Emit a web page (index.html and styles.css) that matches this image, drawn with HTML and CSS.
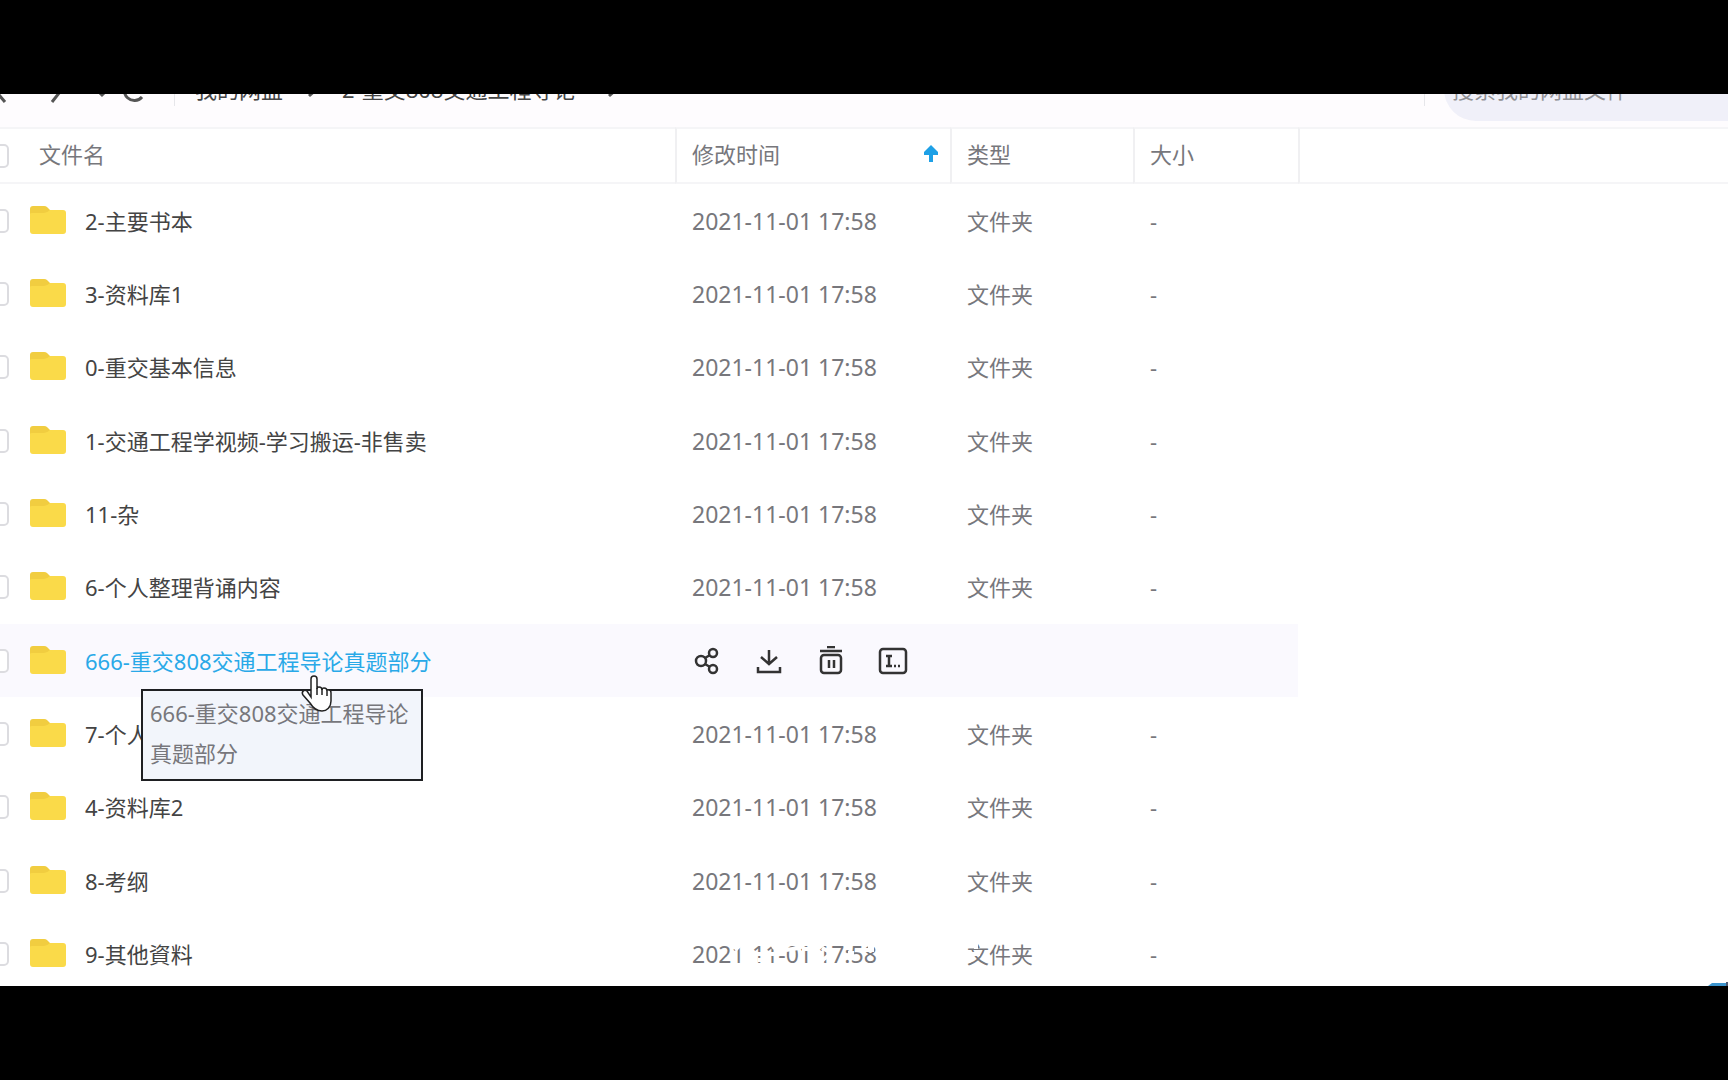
FILE: index.html
```html
<!DOCTYPE html>
<html lang="zh-CN">
<head>
<meta charset="utf-8">
<title>我的网盘</title>
<link rel="stylesheet" href="styles.css">
</head>
<body>
<svg class="defs" width="0" height="0" aria-hidden="true">
  <symbol id="folder" viewBox="0 0 38 30">
    <path d="M1 5q0-3 3-3h11q2 0 3 1l4 4v8H1z" fill="#f1cd40"/>
    <path d="M1 10q0-1 2-1h12q3 0 6-3h13q3 0 3 3v18q0 3-3 3H4q-3 0-3-3z" fill="#fada49"/>
  </symbol>
</svg>
<main class="stage">
  <header class="toolbar">
    <nav class="crumbs" aria-label="路径">
      <button class="nav back" aria-label="后退"><svg width="20" height="28" viewBox="0 0 20 28"><path d="M17 27 6 14 17 1"/></svg></button>
      <button class="nav next" aria-label="前进"><svg width="20" height="28" viewBox="0 0 20 28"><path d="m4 0 11 13L4 27"/></svg></button>
      <button class="nav more" aria-label="历史"><svg width="12" height="28" viewBox="0 0 12 28"><path d="m2 16 4 4 4-4"/></svg></button>
      <button class="nav reload" aria-label="刷新"><svg width="24" height="28" viewBox="0 0 24 28"><path d="M20 9A10 10 0 1 0 20 22"/></svg></button>
      <span class="rule"></span>
      <a class="crumb root" href="#">我的网盘</a>
      <svg class="sep" width="16" height="28" viewBox="0 0 16 28"><path d="m2 5 9 8-9 8"/></svg>
      <a class="crumb current" href="#">2-重交808交通工程导论</a>
      <svg class="sep" width="16" height="28" viewBox="0 0 16 28"><path d="m2 5 9 8-9 8"/></svg>
    </nav>
    <div class="searcharea">
      <input class="search" type="search" placeholder="搜索我的网盘文件" aria-label="搜索我的网盘文件">
    </div>
  </header>
  <table class="files">
    <thead>
      <tr>
        <th class="pick"><input type="checkbox" aria-label="全选"></th>
        <th class="name">文件名</th>
        <th class="time"><span class="sort">修改时间<svg width="14" height="18" viewBox="0 0 14 18"><path d="M7 17V6" fill="none" stroke="#1ea0e6" stroke-width="4"/><path d="M7 0 0 7v3h14V7z" fill="#1ea0e6"/></svg></span></th>
        <th class="type">类型</th>
        <th class="size">大小</th>
        <th class="rest"></th>
      </tr>
    </thead>
    <tbody>
      <tr><td class="pick"><input type="checkbox" aria-label="2-主要书本"></td><td class="name"><a href="#"><svg width="38" height="30"><use href="#folder"/></svg>2-主要书本</a></td><td class="time">2021-11-01 17:58</td><td class="type">文件夹</td><td class="size">-</td><td class="rest"></td></tr>
      <tr><td class="pick"><input type="checkbox" aria-label="3-资料库1"></td><td class="name"><a href="#"><svg width="38" height="30"><use href="#folder"/></svg>3-资料库1</a></td><td class="time">2021-11-01 17:58</td><td class="type">文件夹</td><td class="size">-</td><td class="rest"></td></tr>
      <tr><td class="pick"><input type="checkbox" aria-label="0-重交基本信息"></td><td class="name"><a href="#"><svg width="38" height="30"><use href="#folder"/></svg>0-重交基本信息</a></td><td class="time">2021-11-01 17:58</td><td class="type">文件夹</td><td class="size">-</td><td class="rest"></td></tr>
      <tr><td class="pick"><input type="checkbox" aria-label="1-交通工程学视频"></td><td class="name"><a href="#"><svg width="38" height="30"><use href="#folder"/></svg>1-交通工程学视频-学习搬运-非售卖</a></td><td class="time">2021-11-01 17:58</td><td class="type">文件夹</td><td class="size">-</td><td class="rest"></td></tr>
      <tr><td class="pick"><input type="checkbox" aria-label="11-杂"></td><td class="name"><a href="#"><svg width="38" height="30"><use href="#folder"/></svg>11-杂</a></td><td class="time">2021-11-01 17:58</td><td class="type">文件夹</td><td class="size">-</td><td class="rest"></td></tr>
      <tr><td class="pick"><input type="checkbox" aria-label="6-个人整理背诵内容"></td><td class="name"><a href="#"><svg width="38" height="30"><use href="#folder"/></svg>6-个人整理背诵内容</a></td><td class="time">2021-11-01 17:58</td><td class="type">文件夹</td><td class="size">-</td><td class="rest"></td></tr>
      <tr class="active">
        <td class="pick"><input type="checkbox" aria-label="666-重交808交通工程导论真题部分"></td>
        <td class="name"><a href="#"><svg width="38" height="30"><use href="#folder"/></svg>666-重交808交通工程导论真题部分</a>
          <div class="tip" role="tooltip">666-重交808交通工程导论真题部分</div>
          <svg class="cursor" width="32" height="40" viewBox="0 0 32 40"><path d="M11 22V4q0-3 3-3t3 3v10q0-2 2-2 3 0 3 3 0-2 2-2 3 0 3 3 0-2 2-1 2 0 2 3v8c0 6-4 10-9 10-6 0-9-3-12-8l-7-8c-2-3 1-6 4-4z" fill="#fff" stroke="#222" stroke-width="1.5"/><path d="M17 13v7M22 14v6M27 16v5" stroke="#222" stroke-width="1.5"/></svg>
        </td>
        <td class="tools" colspan="3"><div class="actions">
          <button aria-label="分享"><svg width="30" height="30" viewBox="0 0 30 30"><circle cx="9" cy="15" r="5"/><circle cx="21" cy="7" r="4"/><circle cx="21" cy="23" r="4"/><path d="m13 12 5-3M13 18l5 3"/></svg></button>
          <button aria-label="下载"><svg width="30" height="30" viewBox="0 0 30 30"><path d="M15 4v14M7 11l8 7 8-7M4 21v5h22v-5"/></svg></button>
          <button aria-label="删除"><svg width="30" height="30" viewBox="0 0 30 30"><path d="M11 1h8M4 5h22M13 14v8M18 14v8"/><rect x="5" y="9" width="20" height="18" rx="3"/></svg></button>
          <button aria-label="重命名"><svg width="30" height="30" viewBox="0 0 30 30"><rect x="2" y="3" width="26" height="24" rx="3"/><path d="M8 10h6M11 10v10M8 20h6M16 20h2M20 20h2"/></svg></button>
        </div></td>
        <td class="rest"></td>
      </tr>
      <tr><td class="pick"><input type="checkbox" aria-label="7-个人"></td><td class="name"><a href="#"><svg width="38" height="30"><use href="#folder"/></svg>7-个人</a></td><td class="time">2021-11-01 17:58</td><td class="type">文件夹</td><td class="size">-</td><td class="rest"></td></tr>
      <tr><td class="pick"><input type="checkbox" aria-label="4-资料库2"></td><td class="name"><a href="#"><svg width="38" height="30"><use href="#folder"/></svg>4-资料库2</a></td><td class="time">2021-11-01 17:58</td><td class="type">文件夹</td><td class="size">-</td><td class="rest"></td></tr>
      <tr><td class="pick"><input type="checkbox" aria-label="8-考纲"></td><td class="name"><a href="#"><svg width="38" height="30"><use href="#folder"/></svg>8-考纲</a></td><td class="time">2021-11-01 17:58</td><td class="type">文件夹</td><td class="size">-</td><td class="rest"></td></tr>
      <tr><td class="pick"><input type="checkbox" aria-label="9-其他資料"></td><td class="name"><a href="#"><svg width="38" height="30"><use href="#folder"/></svg>9-其他資料</a></td><td class="time">2021-11-01 17:58</td><td class="type">文件夹</td><td class="size">-</td><td class="rest"></td></tr>
    </tbody>
  </table>
  <svg class="mark" width="260" height="28" viewBox="0 0 260 28" aria-hidden="true"><path d="M5 10l5-5M14 16h10M24 14h20M28 20h4M42 8l6-4M56 10l13-2M72 9h10M90 22l8-6M104 14l-12-6M118 13h6M126 10h18M138 6h6M238 14h12M246 4v5"/></svg>
  <svg class="corner" width="20" height="4" viewBox="0 0 20 4" aria-hidden="true"><path d="M0 4 4 1h16v3z" fill="#3b94cd"/><path d="M18 0h2v4h-2z" fill="#4b5872"/></svg>
</main>
</body>
</html>
```
FILE: styles.css
```css
* { box-sizing: border-box; }
body {
  margin: 0;
  padding: 94px 0;
  background: #000;
  color: #444;
  font-family: "Noto Sans", "Noto Sans CJK SC", sans-serif;
  font-size: 22px;
  line-height: 32px;
}
a { color: inherit; text-decoration: none; }
button { padding: 0; border: 0; background: none; }
svg { display: block; flex: none; }
.defs { position: absolute; }

.stage {
  position: relative;
  height: calc(100vh - 188px);
  overflow: hidden;
  background: #fff;
}

/* Toolbar, scrolled partly under the top edge */
.toolbar {
  display: flex;
  align-items: flex-end;
  justify-content: space-between;
  height: 33px;
  padding-bottom: 6px;
  overflow: hidden;
  background: #fefcfe;
}
.crumbs { display: flex; align-items: center; height: 64px; }
.crumbs svg { fill: none; stroke: #555; stroke-width: 3; }
.back { margin-left: -12px; }
.next { margin-left: 40px; }
.more { margin-left: 28px; }
.reload { margin-left: 14px; }
.rule { width: 1px; height: 34px; margin: 0 20px 0 28px; background: #e6e6ea; }
.crumb + .sep { margin-left: 24px; }
.sep + .crumb { margin-left: 19px; }
.current + .sep { margin-left: 32px; }
.searcharea {
  display: flex;
  align-items: center;
  width: 304px;
  height: 64px;
}
.searcharea::before {
  content: "";
  width: 1px;
  height: 34px;
  margin-right: 19px;
  background: #e6e6ea;
}
.search {
  flex: 1;
  min-width: 0;
  height: 64px;
  padding: 0 8px;
  border: 0;
  border-radius: 32px 0 0 32px;
  background: #f0f0f9;
  font: inherit;
}
.search::placeholder { color: #909095; opacity: 1; }

.files {
  width: 100%;
  table-layout: fixed;
  border-collapse: separate;
  border-spacing: 0;
}
th, td { height: 73px; padding: 0 0 0 15px; text-align: left; font-weight: 400; }
tr:nth-child(3n) td { height: 74px; }
th {
  height: 57px;
  padding-bottom: 3px;
  border-top: 2px solid #f5f5f7;
  border-bottom: 2px solid #f5f5f7;
  color: #77777c;
}
th.time, th.type, th.size, th.rest { border-left: 2px solid #f0f0f2; }
th.pick, td.pick { width: 24px; padding: 0; }
th.name { width: 651px; }
th.time { width: 275px; }
th.type { width: 183px; }
th.size { width: 165px; }
td { padding-left: 17px; color: #77777c; }
td.name { position: relative; padding-left: 5px; color: #444; }
td.time { font-size: 23px; }
td.name a { display: flex; align-items: center; gap: 18px; }
td.name a svg { margin-bottom: 4px; }
.sort { display: flex; align-items: center; justify-content: space-between; padding-right: 12px; }

input[type="checkbox"] {
  appearance: none;
  display: block;
  width: 24px;
  height: 24px;
  margin: 0 0 0 -15px;
  border: 2px solid #dcdce0;
  border-radius: 5px;
  background: #fff;
}

.active td:not(.rest) { background: #faf9fe; }
.active td.name { color: #29a9e8; }
.actions { display: flex; gap: 32px; }
.actions svg { fill: none; stroke: #333; stroke-width: 2.5; }
.tip {
  position: absolute;
  z-index: 1;
  left: 117px;
  top: 65px;
  width: 282px;
  padding: 2px 7px 6px;
  border: 2px solid #1e1f22;
  background: #f2f5fb;
  color: #77777c;
  line-height: 40px;
}
.cursor { position: absolute; z-index: 2; left: 276px; top: 51px; }

.mark { position: absolute; left: 730px; bottom: 18px; fill: none; stroke: #fff; stroke-width: 4; }
.corner { position: absolute; right: 0; bottom: 0; }
```
